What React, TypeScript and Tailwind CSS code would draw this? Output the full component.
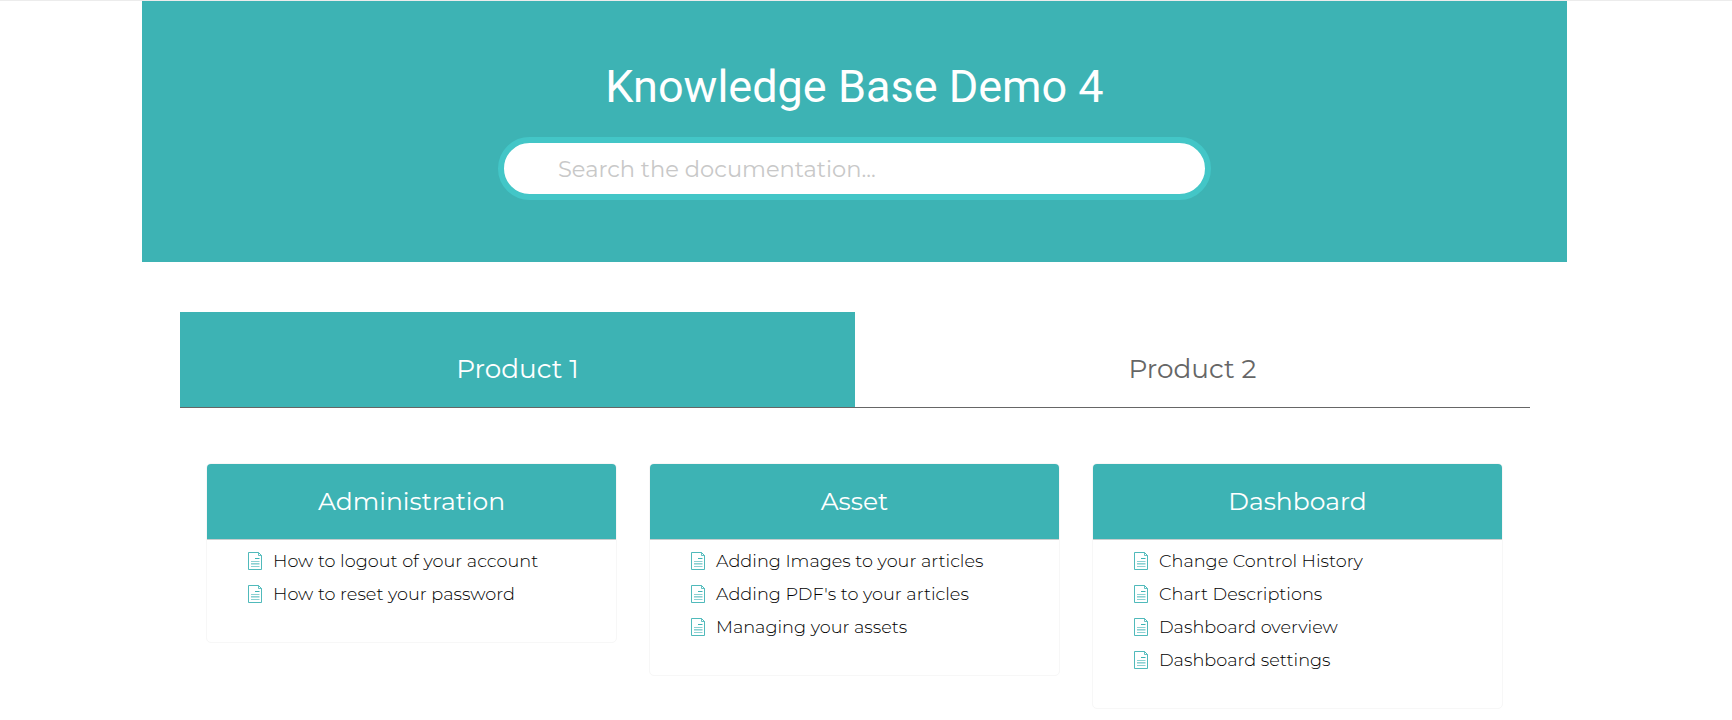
const categories = [
  {
    title: "Administration",
    articles: ["How to logout of your account", "How to reset your password"],
  },
  {
    title: "Asset",
    articles: [
      "Adding Images to your articles",
      "Adding PDF's to your articles",
      "Managing your assets",
    ],
  },
  {
    title: "Dashboard",
    articles: [
      "Change Control History",
      "Chart Descriptions",
      "Dashboard overview",
      "Dashboard settings",
    ],
  },
];

function DocumentIcon() {
  return (
    <svg
      width="15"
      height="18"
      viewBox="0 0 15 18"
      fill="none"
      stroke="#3db3b4"
      strokeWidth="1"
      className="mt-[7px] shrink-0"
      aria-hidden="true"
    >
      <path d="M0.5 0.5H10.5L13.5 3.5V17.5H0.5Z" strokeOpacity="0.9" />
      <path d="M10.5 0.5V3.5H13.5" strokeOpacity="0.8" />
      <path d="M7 6.5H11.5" />
      <path d="M3 9.5H11.5M3 11.5H11.5M3 14.5H11.5" strokeOpacity="0.6" />
      <path d="M3 12.5H11.5" strokeOpacity="0.35" />
    </svg>
  );
}

function CategoryCard({ title, articles }: { title: string; articles: string[] }) {
  return (
    <section className="rounded-[5px] border border-[#f7f7f7] pb-[31px]">
      <h2 className="h-[76px] rounded-t-[4px] border-b border-[#c9cdcd] bg-[#3db3b4] text-center text-[25px] leading-[74px] text-white">
        {title}
      </h2>
      <ul className="pt-[5px] pl-[41px]">
        {articles.map((article) => (
          <li key={article} className="flex h-[33px] items-start gap-[10px]">
            <DocumentIcon />
            <a href="#" className="text-[17.7px] leading-[31px] font-light whitespace-nowrap text-black">
              {article}
            </a>
          </li>
        ))}
      </ul>
    </section>
  );
}

export default function App() {
  return (
    <div className="h-[720px] overflow-hidden border-t border-[#ececec] bg-white font-['Montserrat','Inter',sans-serif]">
      <header className="ml-[142px] flex h-[261px] w-[1425px] flex-col items-center bg-[#3db3b4]">
        <h1 className="mt-[59px] font-['Roboto',sans-serif] text-[45px] leading-[54px] font-normal text-white">
          Knowledge Base Demo 4
        </h1>
        <input
          type="text"
          placeholder="Search the documentation..."
          className="mt-[23px] h-[63px] w-[713px] rounded-full border-[6px] border-[#43c6c7] bg-white px-[54px] text-[22.55px] placeholder:text-[#c8c8c8] placeholder:opacity-100"
        />
      </header>
      <nav className="mt-[50px] ml-[180px] flex h-[96px] w-[1350px] border-b border-[#666666] text-center text-[26.3px] leading-[114px]">
        <a href="#" className="h-[95px] w-1/2 bg-[#3db3b4] text-white">
          Product 1
        </a>
        <a href="#" className="h-[95px] w-1/2 text-[#666666]">
          Product 2
        </a>
      </nav>
      <main className="mt-[55px] ml-[206px] grid w-[1297px] grid-cols-3 items-start gap-x-[32px]">
        {categories.map((category) => (
          <CategoryCard key={category.title} {...category} />
        ))}
      </main>
    </div>
  );
}
